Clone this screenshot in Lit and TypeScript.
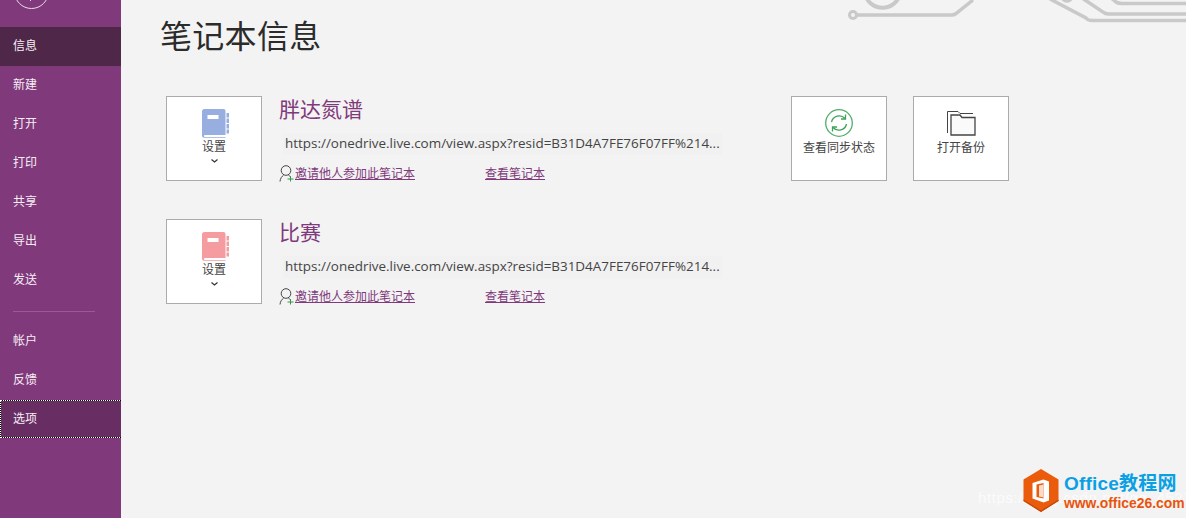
import { LitElement, html, css, svg } from "lit";
import { customElement } from "lit/decorators.js";

const bookPath = (c: string) => svg`
  <path d="M2.500 0H21.500a2 2 0 0 1 2 2V26H3a1 1 0 0 0-1 1.200L2.600 28H23.500V28.800H2a2 2 0 0 1-2-2V2.500a2.500 2.500 0 0 1 2.500-2.500Z" fill="${c}"/>
  <rect x="5.500" y="6" width="11" height="4" fill="#fff"/>
  <rect x="24.500" y="4" width="2.500" height="4.500" fill="${c}"/>
  <rect x="24.500" y="9.500" width="2.500" height="4.500" fill="${c}"/>
  <rect x="24.500" y="15" width="2.500" height="4.500" fill="${c}"/>
  <rect x="24.500" y="20.500" width="2.500" height="4" fill="${c}"/>`;

const invite = html`<svg class="person" width="16" height="18" viewBox="0 0 16 18">
  <circle cx="7" cy="6.500" r="4.800" fill="none" stroke="#444" stroke-width="1"/>
  <path d="M1 17.500C1.300 14.500 2.800 12.300 4.500 11.300M9.500 11.300c.8.300 1.500.800 2 1.500" fill="none" stroke="#444" stroke-width="1"/>
  <path d="M11.500 12V17.500M8.500 15H14.500" stroke="#2f9a4b" stroke-width="1" fill="none"/>
</svg>`;

@customElement("app-root")
export class AppRoot extends LitElement {
  static styles = css`
    :host { display: block; width: 1186px; height: 518px; overflow: hidden; position: relative; background: #f3f3f3;
      font-family: "Noto Sans CJK SC", "Noto Sans", sans-serif; color: #444; }
    .page { display: flex; height: 518px; }
    .side { width: 121px; flex: none; background: #80397b; color: #f6eef5; font-size: 12px; padding-top: 27px; box-sizing: border-box; position: relative; overflow: hidden; }
    .back { position: absolute; left: 14px; top: -26px; width: 35px; height: 35px; border: 1.500px solid #e9d9e8; border-radius: 50%; box-sizing: border-box; }
    .tick { position: absolute; left: 30px; top: 0; width: 1px; height: 1px; background: #e9d9e8; }
    .item { height: 39px; line-height: 35px; padding-left: 13px; box-sizing: border-box; }
    .item.active { background: #4f2749; }
    .item.focus { height: 38px; width: 122px; padding-left: 13px; background: #682e63; outline: 1px dotted #fff; outline-offset: -1px; box-shadow: inset 0 0 0 1px #000; line-height: 35px; }
    .sep { height: 1px; background: #9a5a95; margin: 11px 26px 10px 13px; width: 82px; }
    .main { flex: 1; position: relative; padding: 11px 0 0 40px; }
    h1 { margin: 0 0 0 -1px; font-size: 32px; font-weight: 400; line-height: 46px; color: #2b2b2b; height: 85px; letter-spacing: .3px; }
    .row { display: flex; height: 123px; padding-left: 5px; }
    .tile { width: 96px; height: 85px; box-sizing: border-box; background: #fff; border: 1px solid #ababab; display: flex; flex-direction: column; align-items: center; font-size: 12px; color: #444; flex: none; }
    .tile.nb { padding-top: 12px; }
    .tile.nb svg.book { display: block; margin-left: 2px; }
    .tile .lbl { line-height: 16px; }
    .chev { display: block; margin-top: 5px; }
    .tile.act { padding-top: 12px; }
    .tile.act .lbl { margin-top: 2px; line-height: 16px; white-space: nowrap; }
    .info { width: 529px; padding-left: 17px; box-sizing: border-box; flex: none; }
    .name { font-size: 21px; line-height: 24px; color: #80397b; height: 37px; }
    .url { font-family: "Open Sans", "Noto Sans", sans-serif; font-size: 13.450px; line-height: 21px; margin-left: 4px; padding-left: 2px; width: 439px; background: #f1f1f1; color: #444; white-space: nowrap; height: 22px; box-sizing: border-box; }
    .links { display: flex; align-items: center; margin-top: 9px; font-size: 12px; height: 18px; }
    .person { flex: none; }
    a { color: #80397b; text-decoration: underline; line-height: 18px; }
    .l2 { margin-left: 70px; }
    .actions { display: flex; gap: 26px; }
    .circuit { position: absolute; left: 0; top: 0; }
    .wm { position: absolute; left: 978px; top: 489px; font-family: "Liberation Sans", sans-serif; font-size: 15px; color: #fbfbfb; letter-spacing: .6px; white-space: nowrap; }
    .logo { position: absolute; left: 1022px; top: 468px; display: flex; align-items: center; gap: 4px; }
    .logo svg { flex: none; }
    .lt { display: flex; flex-direction: column; font-family: "Liberation Sans", "Noto Sans CJK SC", sans-serif; font-weight: 700; }
    .l-a { color: #0aa0e3; font-size: 19px; line-height: 24px; white-space: nowrap; letter-spacing: .2px; }
    .l-b { color: #e9540d; font-size: 13.900px; line-height: 15px; white-space: nowrap; }
  `;

  nb(color: string, name: string) {
    return html`<div class="row">
      <div class="tile nb">
        <svg class="book" width="27" height="29" viewBox="0 0 27 29">${bookPath(color)}</svg>
        <span class="lbl">设置</span>
        <svg class="chev" width="7" height="4" viewBox="0 0 7 4"><path d="M.5.500 3.500 3 6.500.500" fill="none" stroke="#333" stroke-width="1.200"/></svg>
      </div>
      <div class="info">
        <div class="name">${name}</div>
        <div class="url">https://onedrive.live.com/view.aspx?resid=B31D4A7FE76F07FF%214...</div>
        <div class="links">${invite}<a>邀请他人参加此笔记本</a><a class="l2">查看笔记本</a></div>
      </div>
      ${name === "胖达氮谱" ? html`<div class="actions">
        <div class="tile act">
          <svg width="30" height="28" viewBox="0 0 30 28">
            <circle cx="15" cy="14" r="13.300" fill="none" stroke="#4fae6a" stroke-width="1.300"/>
            <path d="M7.500 13A7.800 7.800 0 0 1 21 9.500M22.500 15A7.800 7.800 0 0 1 9 18.500" fill="none" stroke="#3da35a" stroke-width="1.300"/>
            <path d="M21.500 5.500V10H17M8.500 22.500V18H13" fill="none" stroke="#3da35a" stroke-width="1.300"/>
          </svg>
          <span class="lbl">查看同步状态</span>
        </div>
        <div class="tile act">
          <svg width="30" height="28" viewBox="0 0 30 28">
            <path d="M1.500 24V2.500H12L14 4.500H27" fill="none" stroke="#444" stroke-width="1"/>
            <path d="M5 26V6H14L16 8.500H29V26Z" fill="#fafafa" stroke="#444" stroke-width="1.300"/>
          </svg>
          <span class="lbl">打开备份</span>
        </div>
      </div>` : ""}
    </div>`;
  }

  render() {
    const top = ["信息", "新建", "打开", "打印", "共享", "导出", "发送"];
    return html`<div class="page">
      <nav class="side">
        <div class="back"></div>
        <div class="tick"></div>
        ${top.map((t, i) => html`<div class="item ${i === 0 ? "active" : ""}">${t}</div>`)}
        <div class="sep"></div>
        <div class="item">帐户</div>
        <div class="item">反馈</div>
        <div class="item focus">选项</div>
      </nav>
      <main class="main">
        <h1>笔记本信息</h1>
        ${this.nb("#98aee0", "胖达氮谱")}
        ${this.nb("#f49c9f", "比赛")}
      </main>
    </div>
    <svg class="circuit" width="1186" height="30" viewBox="0 0 1186 30" fill="none" stroke="#c9c9c9" stroke-width="3.500">
      <circle cx="853" cy="15" r="3.500" stroke-width="3"/>
      <path d="M857 15H952Q954 15 956 13.500L973 0"/>
      <path d="M865 -6A18 18 0 0 0 900 -6" stroke-width="4"/>
      <circle cx="1067" cy="-4" r="5"/>
      <path d="M1050 -1 1086 18Q1088 20.500 1092 20.500H1186"/>
      <path d="M1082 -2 1103 12Q1105 14 1109 14H1186"/>
      <path d="M1110 -3 1116 2Q1118 3.500 1122 3.500H1186"/>
    </svg>
    <div class="wm">https://blog.csdn.net/qq_45271000</div>
    <div class="logo">
      <svg width="38" height="46" viewBox="0 0 38 46">
        <path d="M19 1 36.500 11.500V33L19 44 1.500 33V11.500Z" fill="#ea5b0c"/>
        <path d="M1.500 31.500 19 42.500 36.500 31.500V33L19 44 1.500 33Z" fill="#c4480a"/>
        <path d="M21.500 11.500 10.500 15V30.500L21.500 34.500 27 32.500V13.500Z" fill="#fff"/>
        <path d="M21.500 15V30.500L14.500 29V16.500Z" fill="#ea5b0c"/>
        <path d="M17 17.500 21.500 16.500V29.500L17 28.500Z" fill="#fbdcc8"/>
      </svg>
      <div class="lt"><span class="l-a">Office教程网</span><span class="l-b">www.office26.com</span></div>
    </div>`;
  }
}
